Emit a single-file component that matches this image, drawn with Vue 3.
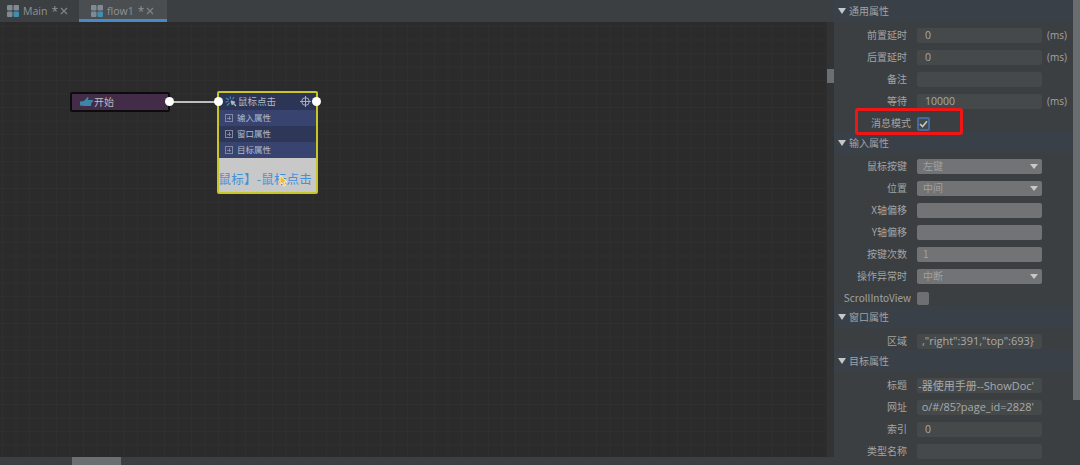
<script setup>
const tabs = [
  { name: 'Main', active: false },
  { name: 'flow1', active: true },
]
const nodeRows = ['输入属性', '窗口属性', '目标属性']
const sections = [
  {
    title: '通用属性', cls: 's1',
    rows: [
      { label: '前置延时', value: '0', unit: '(ms)' },
      { label: '后置延时', value: '0', unit: '(ms)' },
      { label: '备注', value: '' },
      { label: '等待', value: '10000', unit: '(ms)' },
      { label: '消息模式', check: true, on: true },
    ],
  },
  {
    title: '输入属性', cls: 's2',
    rows: [
      { label: '鼠标按键', value: '左键', select: true, off: true },
      { label: '位置', value: '中间', select: true, off: true },
      { label: 'X轴偏移', value: '', off: true },
      { label: 'Y轴偏移', value: '', off: true },
      { label: '按键次数', value: '1', off: true },
      { label: '操作异常时', value: '中断', select: true, off: true },
      { label: 'ScrollIntoView', check: true, on: false },
    ],
  },
  {
    title: '窗口属性', cls: 's3',
    rows: [{ label: '区域', value: ',"right":391,"top":693}', long: true }],
  },
  {
    title: '目标属性', cls: 's4',
    rows: [
      { label: '标题', value: '-器使用手册--ShowDoc\'', long: true },
      { label: '网址', value: 'o/#/85?page_id=2828\'', long: true },
      { label: '索引', value: '0' },
      { label: '类型名称', value: '' },
    ],
  },
]
</script>

<template>
  <div class="app">
    <div class="left">
      <div class="tabbar">
        <div v-for="t in tabs" :key="t.name" class="tab" :class="{ active: t.active }">
          <svg class="tab-icon" width="12" height="12" viewBox="0 0 12 12">
            <rect x="0" y="0" width="5.5" height="5.5" rx="1" fill="#7f8b94" />
            <rect x="6.5" y="0" width="5.5" height="5.5" rx="1" fill="#7f8b94" />
            <rect x="0" y="6.5" width="5.5" height="5.5" rx="1" fill="#7f8b94" />
            <rect x="6.5" y="6.5" width="5.5" height="5.5" rx="1" fill="#3f8fb5" />
          </svg>
          <span class="tab-name">{{ t.name }}</span>
          <span class="tab-star">*</span>
          <svg class="tab-x" width="8" height="8" viewBox="0 0 8 8">
            <path d="M1 1 L7 7 M7 1 L1 7" stroke="#7d8285" stroke-width="1.3" fill="none" />
          </svg>
        </div>
      </div>
      <div class="canvas-wrap">
        <div class="canvas">
          <svg class="wire" width="50" height="6" viewBox="0 0 50 6">
            <line x1="0" y1="3" x2="50" y2="3" stroke="#f2f2f2" stroke-width="1.6" />
          </svg>

          <div class="node start">
            <svg class="hand" width="13" height="12" viewBox="0 0 13 12">
              <path d="M0 5.5 L4 5 L7.5 1 L8.6 1.4 L8 4 H12 a1 1 0 0 1 0.5 2 L11.5 6.5 L11 10 H4 L0 9.5 z" fill="#3d86a8" />
            </svg>
            <span class="start-text">开始</span>
            <i class="port port-out"></i>
          </div>

          <div class="node action">
            <i class="port port-in"></i>
            <i class="port port-out"></i>
            <div class="action-head">
              <svg class="spark" width="12" height="11" viewBox="0 0 12 11">
                <path d="M6 5 L11 10 M6 5 L7.5 9 M6 5 L10 6.5" stroke="#a9b6c4" stroke-width="1.4" fill="none" />
                <path d="M1 2 L4 4 M5 0.5 L5.6 3 M9 1 L7.6 3.2 M0.5 6 L3.5 5.5 M2 9.5 L4.5 7" stroke="#3f8fb5" stroke-width="1.2" fill="none" />
              </svg>
              <span class="head-text">鼠标点击</span>
              <svg class="target" width="11" height="11" viewBox="0 0 11 11">
                <circle cx="5.5" cy="5.5" r="3.8" stroke="#a8adb8" stroke-width="1" fill="none" />
                <path d="M5.5 0 V11 M0 5.5 H11" stroke="#a8adb8" stroke-width="1" />
              </svg>
            </div>
            <div v-for="(r, i) in nodeRows" :key="r" class="action-row" :class="{ alt: i === 1 }">
              <span class="plus"></span>
              <span class="row-text">{{ r }}</span>
            </div>
            <div class="action-body">
              <span class="body-text">【鼠标】-鼠标点击</span>
              <svg class="cursor" width="9" height="12" viewBox="0 0 9 12">
                <path d="M1 0.5 V9.5 L3.2 7.6 L4.8 11 L6.5 10.2 L5 7 H8 Z" fill="#f5b92e" stroke="#fff3c8" stroke-width="0.9" />
              </svg>
            </div>
          </div>
        </div>
        <div class="vscroll"><div class="vthumb"></div></div>
      </div>
      <div class="hscroll"><div class="hthumb"></div></div>
    </div>

    <div class="panel">
      <div class="panel-main">
        <section v-for="s in sections" :key="s.title" class="section" :class="s.cls">
          <div class="sec-head">
            <i class="tri"></i>
            <span class="txt">{{ s.title }}</span>
          </div>
          <div class="sec-body">
            <div v-for="r in s.rows" :key="r.label" class="row" :class="{ 'row-check': r.check }">
              <label class="lbl"><span class="lbl-in txt">{{ r.label }}</span></label>
              <template v-if="r.check">
                <span class="check" :class="{ on: r.on }">
                  <svg v-if="r.on" width="9" height="8" viewBox="0 0 9 8">
                    <path d="M1 4 L3.5 6.5 L8 1.2" stroke="#c8c8c8" stroke-width="1.6" fill="none" />
                  </svg>
                </span>
              </template>
              <template v-else>
                <div class="input" :class="{ off: r.off, long: r.long }">
                  <span class="val txt">{{ r.value }}</span>
                  <i v-if="r.select" class="caret"></i>
                </div>
                <span v-if="r.unit" class="unit txt">{{ r.unit }}</span>
              </template>
            </div>
          </div>
        </section>
        <div class="highlight"></div>
      </div>
      <div class="panel-edge"><div class="edge-thumb"></div></div>
    </div>
  </div>
</template>

<style>
html, body { margin: 0; background: #2b2b2b; overflow: hidden; }
</style>

<style scoped>
.app {
  width: 1080px;
  height: 465px;
  display: flex;
  overflow: hidden;
  font-family: "Noto Sans CJK SC", "Open Sans", "Noto Sans", sans-serif;
  font-size: 10px;
  color: #a0a4a7;
}
.txt { position: relative; top: -1px; }
.left {
  width: 834px;
  display: flex;
  flex-direction: column;
}
.tabbar {
  height: 22px;
  background: #3c3f41;
  display: flex;
  box-sizing: border-box;
  flex: none;
}
.tab {
  width: 79px;
  display: flex;
  align-items: center;
  padding-left: 7px;
  box-sizing: border-box;
  height: 22px;
  font-family: "Open Sans", sans-serif;
  font-size: 10.5px;
  color: #8f9497;
}
.tab.active {
  width: 88px;
  padding-left: 12px;
  background: #4a4e51;
  box-shadow: inset 0 -3px 0 #4a88c7;
}
.tab-icon { flex: none; }
.tab-name { margin-left: 4px; }
.tab-star { margin-left: 4px; font-size: 12px; }
.tab-x { margin-left: 2px; }
.canvas-wrap {
  flex: 1;
  display: flex;
  min-height: 0;
}
.canvas {
  position: relative;
  flex: 1;
  background-color: #2b2b2b;
  background-image:
    linear-gradient(to right, #2f2f2f 1px, transparent 1px),
    linear-gradient(to bottom, #2f2f2f 1px, transparent 1px);
  background-size: 13.5px 13.5px;
  background-position: 2px 4px;
}
.vscroll {
  width: 7px;
  background: #313335;
  padding-top: 47px;
  box-sizing: border-box;
}
.vthumb {
  height: 14px;
  background: #6c6f71;
}
.hscroll {
  height: 8px;
  flex: none;
  background: #3c3f41;
  padding-left: 72px;
}
.hthumb {
  width: 49px;
  height: 8px;
  background: #6c6f71;
}
.wire {
  position: absolute;
  left: 169px;
  top: 77px;
}
.node {
  position: absolute;
  box-sizing: border-box;
}
.start {
  left: 70px;
  top: 70px;
  width: 100px;
  height: 20px;
  background: #432c48;
  border: 2px solid #0c0c0c;
  border-radius: 2px;
  display: flex;
  align-items: center;
  padding-left: 8px;
  color: #bdbdbd;
}
.start-text { position: relative; top: -1px; margin-left: 1px; }
.port {
  position: absolute;
  width: 9px;
  height: 9px;
  border-radius: 50%;
  background: #fff;
  z-index: 2;
}
.start .port-out { right: -6px; top: 3px; }
.action {
  left: 217px;
  top: 69px;
  width: 101px;
  height: 103px;
  border: 2px solid #c6c626;
  border-radius: 2px;
  background: #c8c8c8;
  color: #b5bac6;
  display: flex;
  flex-direction: column;
}
.action .port-in { left: -5px; top: 4px; }
.action .port-out { right: -5px; top: 4px; }
.action-head {
  height: 17px;
  flex: none;
  background: #2c3556;
  display: flex;
  align-items: center;
  padding-left: 6px;
  font-size: 9.5px;
}
.head-text { margin-left: 1px; position: relative; top: -1px; }
.spark { flex: none; }
.target { margin-left: auto; margin-right: 5px; }
.action-row {
  height: 16px;
  flex: none;
  background: #38436f;
  display: flex;
  align-items: center;
  padding-left: 6px;
  font-size: 8.5px;
}
.action-row.alt { background: #2e3758; }
.row-text { position: relative; top: -1px; }
.plus {
  width: 6px;
  height: 6px;
  margin-right: 4px;
  border: 1px solid #7f87a2;
  background:
    linear-gradient(#7f87a2, #7f87a2) center / 4px 1px no-repeat,
    linear-gradient(#7f87a2, #7f87a2) center / 1px 4px no-repeat;
}
.action-body {
  position: relative;
  flex: 1;
  overflow: hidden;
  display: flex;
  align-items: center;
  justify-content: flex-end;
  padding-right: 4px;
  background: #c8c8c8;
}
.body-text {
  white-space: nowrap;
  flex: none;
  padding-top: 6px;
  font-size: 12.5px;
  letter-spacing: 0.2px;
  color: #3f92dc;
}
.cursor {
  position: absolute;
  left: 60px;
  top: 17px;
}
.panel {
  width: 246px;
  display: flex;
  background: #3c3f41;
}
.panel-main {
  position: relative;
  width: 239px;
}
.panel-edge {
  flex: 1;
  background: #3c3f41;
}
.edge-thumb {
  height: 400px;
  background: #6a6d6f;
}
.sec-head {
  height: 22px;
  display: flex;
  align-items: center;
  background: #3a4047;
  padding-left: 4px;
  color: #a0a4a7;
}
.tri {
  width: 0;
  height: 0;
  border-left: 4px solid transparent;
  border-right: 4px solid transparent;
  border-top: 6px solid #c4c6c8;
  margin-right: 3px;
}
.sec-body {
  display: flex;
  flex-direction: column;
  gap: 7px;
}
.s1 .sec-body { padding: 6px 0 1px; }
.s2 .sec-body { padding: 5px 0 0; }
.s3 .sec-body { padding: 6px 0 1px; }
.s4 .sec-body { padding: 6px 0 0; }
.row {
  height: 15px;
  display: flex;
  align-items: center;
}
.lbl {
  width: 73px;
  flex: none;
  display: flex;
  justify-content: flex-end;
  overflow: hidden;
  white-space: nowrap;
}
.lbl-in { flex: none; }
.row-check .lbl {
  width: 77px;
  margin-right: 6px;
  padding-left: 10px;
  box-sizing: border-box;
}
.input {
  margin-left: 10px;
  width: 125px;
  height: 15px;
  background: #45494a;
  border-radius: 2px;
  position: relative;
  display: flex;
  align-items: center;
  justify-content: flex-start;
  overflow: hidden;
  padding-left: 8px;
  box-sizing: border-box;
  color: #a8aaac;
  font-family: "Open Sans", "Noto Sans CJK SC", sans-serif;
  font-size: 10.5px;
  white-space: nowrap;
}
.input.long {
  padding: 0 8px 0 4px;
  justify-content: flex-end;
  font-size: 11px;
}
.val { flex: none; }
.input.off {
  background: #727374;
  padding-left: 6px;
  color: #a0a1a2;
  font-family: "Noto Sans CJK SC", sans-serif;
  font-size: 10px;
}
.caret {
  position: absolute;
  right: 4px;
  top: 5px;
  width: 0;
  height: 0;
  border-left: 4px solid transparent;
  border-right: 4px solid transparent;
  border-top: 5px solid #c8c8c8;
}
.unit {
  margin-left: 5px;
  font-family: "Open Sans", sans-serif;
  font-size: 10px;
}
.check {
  width: 12px;
  height: 13px;
  flex: none;
  background: #6e6f70;
  border-radius: 2px;
  display: flex;
  align-items: center;
  justify-content: center;
}
.check.on {
  width: 9px;
  height: 10px;
  background: #45494a;
  border: 2px solid #3f6c9c;
}
.highlight {
  position: absolute;
  left: 21px;
  top: 108px;
  width: 108px;
  height: 27px;
  box-sizing: border-box;
  border: 3px solid #f01616;
  border-radius: 3px;
  pointer-events: none;
}
</style>
